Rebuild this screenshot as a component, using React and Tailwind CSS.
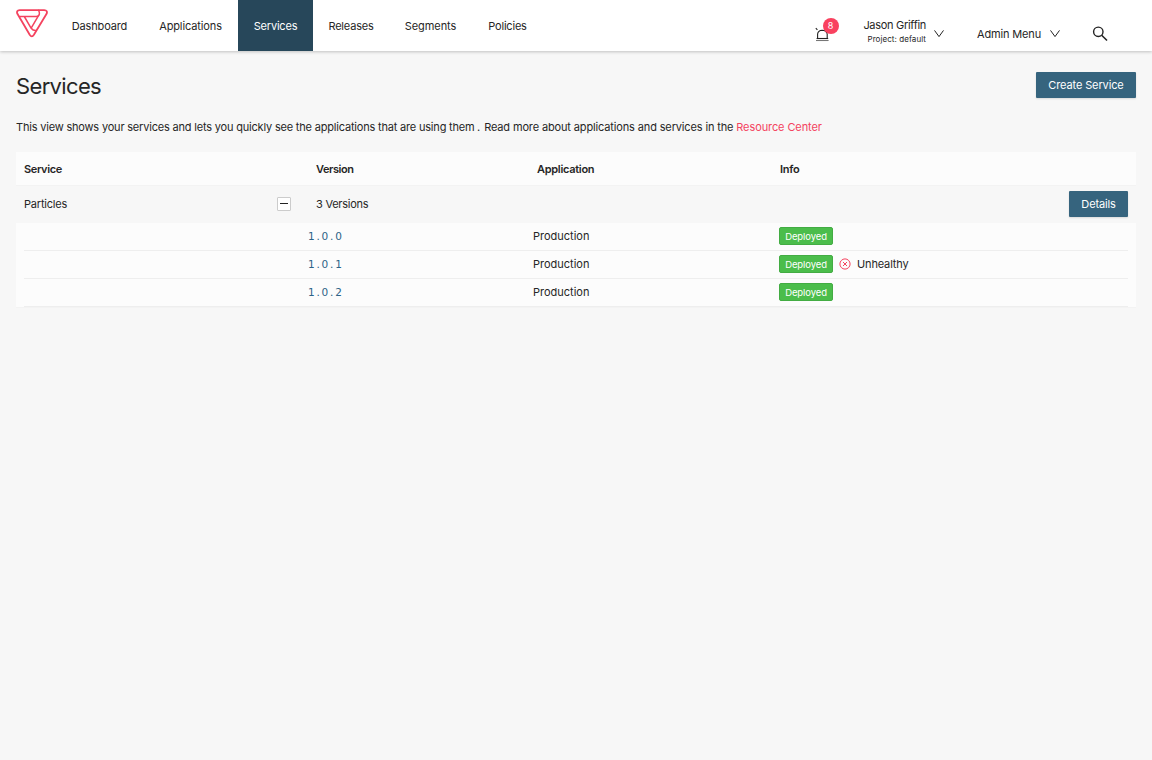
const NAV = [
  { label: 'Dashboard', cls: 'w-[87px] tracking-[-0.15px]' },
  { label: 'Applications', cls: 'w-[95px] tracking-[-0.12px]' },
  { label: 'Services', active: true, cls: 'w-[75px] tracking-[-0.2px]' },
  { label: 'Releases', cls: 'w-[76px] tracking-[-0.2px]' },
  { label: 'Segments', cls: 'w-[84px] tracking-[-0.08px] pr-px' },
  { label: 'Policies', cls: 'w-[70px] tracking-[-0.2px] pr-px' },
];

const VERSIONS = [
  { version: '1.0.0', app: 'Production' },
  { version: '1.0.1', app: 'Production', unhealthy: true },
  { version: '1.0.2', app: 'Production' },
];

function Logo() {
  return (
    <svg width="32" height="30" viewBox="0 0 32 30" fill="none" stroke="#f4435f" strokeWidth="1.8" strokeLinejoin="round" strokeLinecap="round" className="block">
      <path d="M3.6 1.1H28.2Q32 1.3 30.6 4.8L17.9 25.8Q15.8 29 13.7 25.8L1.4 4.8Q0 1.4 3.6 1.1Z" />
      <path d="M3.8 7.5H20.4Q23.2 7.3 23.4 4.8Q23.6 3 22.6 1.4" strokeWidth="1.5" />
      <path d="M8.6 8L15.2 19.3Q17 21.8 20 21.6" strokeWidth="1.5" />
      <path d="M22.2 7.2L15.6 18.4" strokeWidth="1.5" />
    </svg>
  );
}

function Chevron() {
  return (
    <svg width="10" height="8" viewBox="0 0 10 8" fill="none" stroke="#222" strokeWidth="1" className="block">
      <path d="M0.5 0.4L5 6.6L9.5 0.4" />
    </svg>
  );
}

function Alarm() {
  return (
    <svg width="15" height="15" viewBox="0 0 15 15" fill="none" stroke="#222" strokeWidth="1.1" className="block">
      <path d="M2.6 11.5V7Q3 3.4 7.2 3.2Q11.6 3.4 12.2 7V11.5" />
      <path d="M1.6 11.5H13.2" />
      <path d="M1 13.5H13.6" stroke="#777" />
      <path d="M0.8 1.2L2.4 2.8" />
    </svg>
  );
}

function Header() {
  return (
    <header className="relative flex h-[51px] items-start bg-white shadow-[0_1px_3px_rgba(0,0,0,0.22)]">
      <div className="ml-4 mt-[9px] w-10">
        <Logo />
      </div>
      <nav className="flex h-[51px]">
        {NAV.map((n) => (
          <a
            key={n.label}
            className={`flex shrink-0 items-center justify-center pb-px pt-[3px] whitespace-nowrap ${n.cls} ${n.active ? 'bg-[#27475a] text-white' : ''}`}
          >
            {n.label}
          </a>
        ))}
      </nav>
      <div className="relative ml-[272px] mt-[27px]">
        <Alarm />
        <span className="absolute left-[7.5px] top-[-9px] flex h-4 w-4 items-center justify-center rounded-full bg-[#f9415f] text-[9px] text-white">8</span>
      </div>
      <div className="ml-auto flex">
        <div className="mt-[18px] flex flex-col items-end whitespace-nowrap">
          <span className="text-[11px] leading-[14px] tracking-[-0.3px]">Jason Griffin</span>
          <span className="mt-px text-[8px] leading-[13px] tracking-[0.07px]">Project: default</span>
        </div>
        <div className="ml-2 mt-[30px]"><Chevron /></div>
        <span className="ml-[33px] mt-[26px] w-[64px] whitespace-nowrap leading-4 tracking-[-0.15px]">Admin Menu</span>
        <div className="ml-[8.5px] mt-[30px]"><Chevron /></div>
        <svg width="16" height="16" viewBox="0 0 16 16" fill="none" stroke="#222" strokeWidth="1.4" className="ml-[32.5px] mr-[44px] mt-[26px]">
          <circle cx="6.3" cy="5.8" r="4.7" />
          <path d="M9.7 9.3L15 14.5" strokeWidth="1.6" />
        </svg>
      </div>
    </header>
  );
}

function VersionRow({ version, app, unhealthy }) {
  return (
    <div className="mx-2 flex h-7 items-center border-b border-[#eeeeee]">
      <a className="ml-[284px] w-[225px] font-['DejaVu_Sans',sans-serif] text-[10.5px] tracking-[1.8px] text-[#2c6387]">{version}</a>
      <span className="w-[246px]">{app}</span>
      <span className="mb-px flex h-[18px] w-[54px] items-center justify-center rounded-[2px] border border-[#43ac43] bg-[#4bbd4b] pt-[3px] text-[9.5px] tracking-[-0.1px] text-white">Deployed</span>
      {unhealthy && (
        <span className="ml-[6px] flex items-center gap-[6px]">
          <svg width="12" height="12" viewBox="0 0 12 12" fill="none" stroke="#f4435f" className="mb-px block">
            <circle cx="6" cy="6" r="5.1" />
            <path d="M4 4L8 8M8 4L4 8" />
          </svg>
          <span className="tracking-[-0.15px]">Unhealthy</span>
        </span>
      )}
    </div>
  );
}

export default function App() {
  return (
    <div className="min-h-[760px] bg-[#f7f7f7] font-[Inter,sans-serif] text-[11px] text-[#262626]">
      <Header />
      <main className="px-4">
        <div className="flex h-[63px] items-start justify-between pt-[21px]">
          <h1 className="-mt-px text-[22px] leading-[30px] tracking-[-0.65px]">Services</h1>
          <button className="h-[26px] w-[100px] rounded-[1px] bg-[#36647e] tracking-[-0.12px] text-white shadow-[0_1px_2px_rgba(0,0,0,0.12)]">Create Service</button>
        </div>
        <p className="mt-[5px] h-[33px] whitespace-pre leading-[17px]">
          <span className="tracking-[-0.19px]">This view shows your services and lets you quickly see the applications that are using them</span>
          <span className="tracking-[-0.7px]"> .  </span>
          <span className="tracking-[-0.14px]">Read more about applications and services in the </span>
          <a className="tracking-[-0.1px] text-[#f4435f]">Resource Center</a>
        </p>
        <section>
          <div className="flex h-[34px] items-center border-b border-[#f3f3f3] bg-[#fcfcfc] pl-2 pt-px font-semibold">
            <span className="w-[292px] tracking-[-0.36px]">Service</span>
            <span className="w-[221px] tracking-[-0.45px]">Version</span>
            <span className="w-[243px] tracking-[-0.3px]">Application</span>
            <span className="tracking-[-0.25px]">Info</span>
          </div>
          <div className="flex h-[37px] items-center px-2">
            <span className="w-[253px] tracking-[-0.2px]">Particles</span>
            <span className="mb-[2px] flex h-[14px] w-[14px] items-center justify-center rounded-[1px] border border-[#cccccc] bg-white">
              <span className="h-px w-2 bg-[#222]" />
            </span>
            <span className="ml-[25px] tracking-[-0.25px]">3 Versions</span>
            <button className="mb-[2px] ml-auto h-[26px] w-[59px] rounded-[1px] bg-[#36647e] pt-px tracking-[-0.15px] text-white shadow-[0_1px_2px_rgba(0,0,0,0.12)]">Details</button>
          </div>
          <div className="border-b border-[#f3f3f3] bg-[#fcfcfc]">
            {VERSIONS.map((v) => <VersionRow key={v.version} {...v} />)}
          </div>
        </section>
      </main>
    </div>
  );
}
